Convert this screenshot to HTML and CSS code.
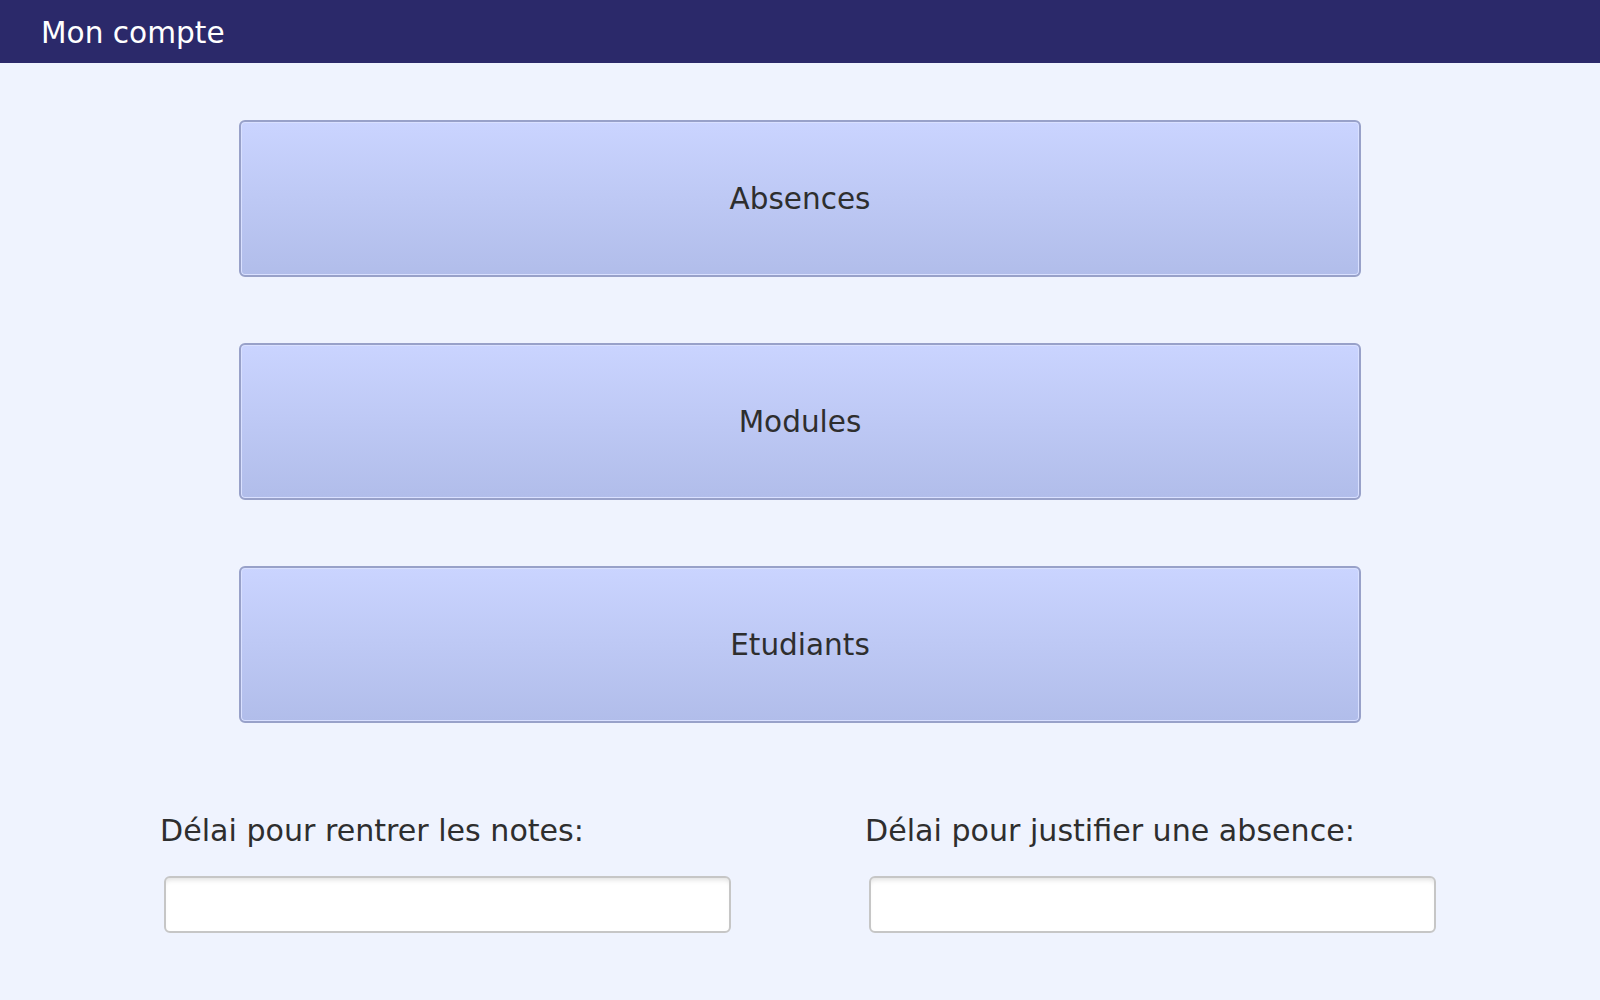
FILE: index.html
```html
<!DOCTYPE html>
<html lang="fr">
<head>
<meta charset="utf-8">
<title>Mon compte</title>
<link rel="stylesheet" href="styles.css">
</head>
<body>
<header class="topbar">
  <h1 class="topbar-title">Mon compte</h1>
</header>
<main class="content">
  <nav class="menu">
    <button class="menu-btn" type="button">Absences</button>
    <button class="menu-btn" type="button">Modules</button>
    <button class="menu-btn" type="button">Etudiants</button>
  </nav>
  <section class="fields">
    <div class="field">
      <label class="field-label" for="notes">Délai pour rentrer les notes:</label>
      <input class="field-input" id="notes" type="text">
    </div>
    <div class="field">
      <label class="field-label" for="absence">Délai pour justifier une absence:</label>
      <input class="field-input" id="absence" type="text">
    </div>
  </section>
</main>
</body>
</html>
```
FILE: styles.css
```css
html, body {
  margin: 0;
  padding: 0;
}
body {
  background: #eff3fe;
  font-family: "DejaVu Sans", Verdana, sans-serif;
  color: #2e2e2e;
}
.topbar {
  height: 63px;
  background: #2b296a;
  display: flex;
  align-items: center;
  padding-left: 41px;
}
.topbar-title {
  margin: 0;
  font-size: 29.6px;
  font-weight: normal;
  color: #ffffff;
  line-height: 34px;
  padding-top: 3px;
}
.content {
  display: flex;
  flex-direction: column;
}
.menu {
  display: flex;
  flex-direction: column;
  align-items: center;
  gap: 66px;
  padding-top: 57px;
}
.menu-btn {
  width: 1122px;
  height: 157px;
  box-sizing: border-box;
  border: 2px solid #98a1c9;
  border-radius: 6px;
  background: linear-gradient(to bottom, #cad4ff 0%, #b1bdea 100%);
  box-shadow: inset 0 0 0 1px #d9e0ff;
  font-family: "DejaVu Sans", Verdana, sans-serif;
  font-size: 29.5px;
  color: #2e2e2e;
  padding: 0;
  cursor: pointer;
}
.fields {
  display: grid;
  grid-template-columns: 705px 705px;
  padding-left: 160px;
  margin-top: 90px;
}
.field {
  display: flex;
  flex-direction: column;
  align-items: flex-start;
}
.field-label {
  font-size: 30.1px;
  line-height: 36px;
  color: #2e2e2e;
}
.field-input {
  margin: 27px 0 0 4px;
  width: 567px;
  height: 57px;
  box-sizing: border-box;
  border: 2px solid #c6c6c6;
  border-radius: 6px;
  background: #ffffff;
  box-shadow: inset 0 5px 5px -3px rgba(0, 0, 0, 0.12);
  outline: none;
}
```
